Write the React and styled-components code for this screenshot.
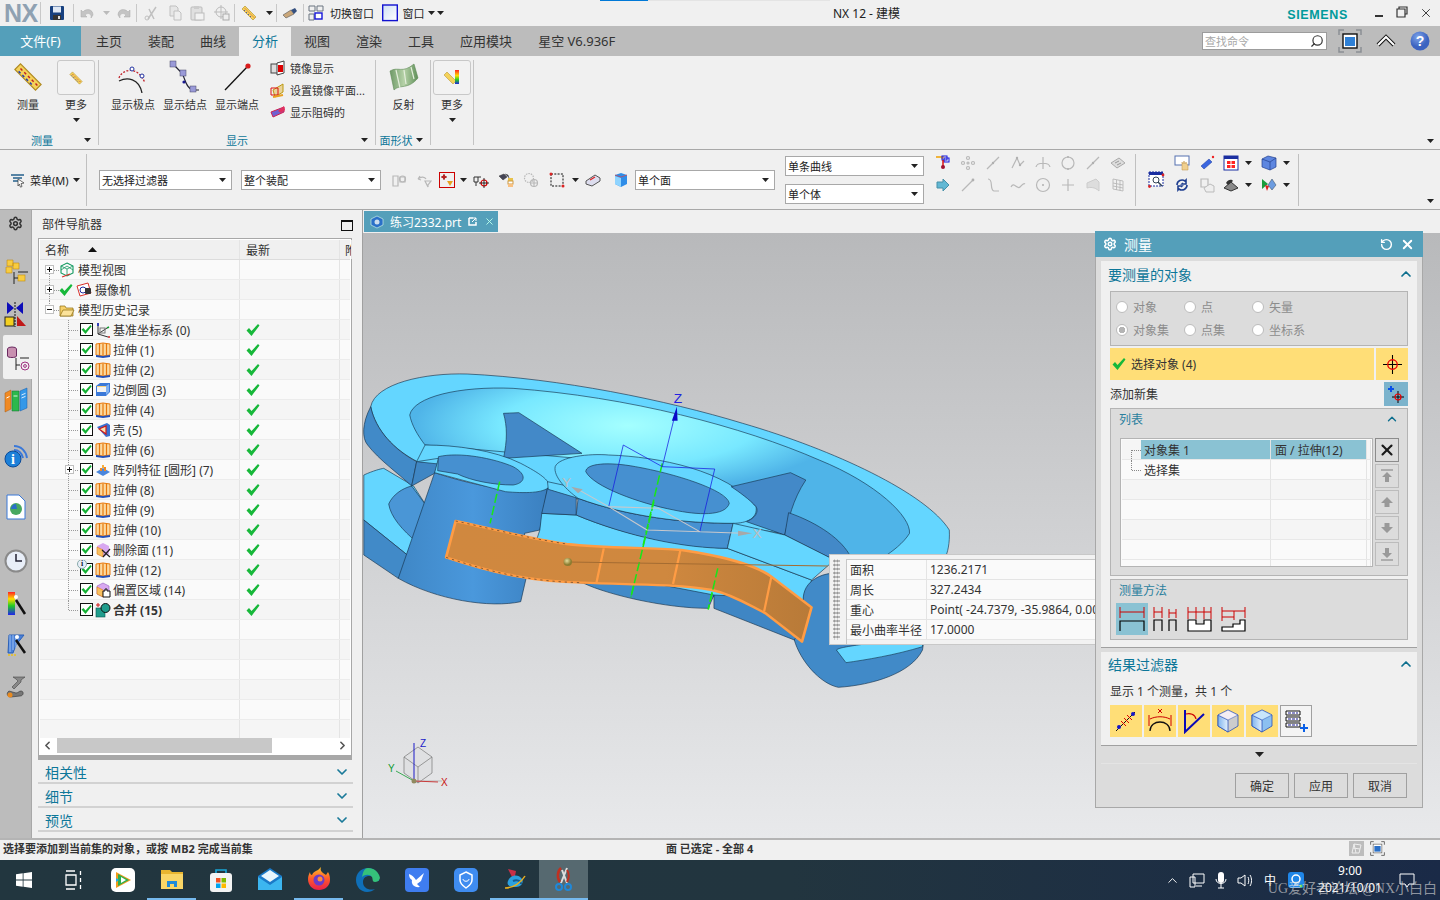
import React from 'react';
import styled, { createGlobalStyle } from 'styled-components';
import { Settings, RotateCw, X, ChevronUp, ChevronDown, ChevronLeft, ChevronRight, Search } from 'lucide-react';

const Global = createGlobalStyle`
  html, body { margin: 0; padding: 0; width: 1440px; height: 900px; overflow: hidden; }
  body { font-family: "Noto Sans", "Noto Sans CJK SC", sans-serif; font-size: 12px; color: #222; }
  svg { display: block; flex: none; }
`;

/* ---------- icons ---------- */
const G = ({ s = 16, vb = '0 0 16 16', children }) => (
  <svg width={s} height={s} viewBox={vb}>{children}</svg>
);
const Arrow = ({ c = '#222' }) => <svg width="7" height="4" viewBox="0 0 7 4"><path d="M0 0h7L3.5 4z" fill={c} /></svg>;

const Save = () => <G><rect x="1" y="1" width="14" height="14" rx="1" fill="#17407f" /><rect x="4" y="1.5" width="8" height="6" fill="#dfe8f4" /><rect x="4" y="10" width="8" height="5" fill="#333" /><rect x="9" y="11" width="2" height="3" fill="#ddd" /></G>;
const Undo = ({ flip }) => <G><g transform={flip ? 'translate(16 0) scale(-1 1)' : undefined}><path d="M3 7C6 3 13 4 13 10l-2 3c1-4-3-6-6-3l2 2H1V5z" fill="#c4c4c4" stroke="#aaa" strokeWidth=".5" /></g></G>;
const Cut = () => <G><path d="M5 14L13 2M11 14L6 4" stroke="#c0c0c0" strokeWidth="1.5" fill="none" /><circle cx="4" cy="13" r="2" fill="none" stroke="#c0c0c0" /></G>;
const Copy = () => <G><path d="M3 1h6l2 2v8H3z" fill="#e6e6e6" stroke="#c0c0c0" /><path d="M7 6h5l2 2v7H7z" fill="#eee" stroke="#c0c0c0" /></G>;
const Paste = () => <G><rect x="2" y="2" width="11" height="13" rx="1" fill="#e0e0e0" stroke="#bbb" /><rect x="5" y="1" width="5" height="3" fill="#ccc" /><rect x="6" y="8" width="9" height="7" fill="#f2f2f2" stroke="#bbb" /></G>;
const Crop = () => <G><circle cx="7" cy="7" r="5" fill="none" stroke="#bbb" /><path d="M7 0v14M0 7h14" stroke="#bbb" /><rect x="9" y="9" width="6" height="6" fill="#eee" stroke="#aaa" /></G>;
const Ruler = ({ s = 16 }) => <G s={s}><path d="M1 4L4 1L15 12L12 15z" fill="#f4d25a" stroke="#b08a20" strokeWidth=".6" /><path d="M4 3.5l1 1M6 5.5l1 1M8 7.5l1 1M10 9.5l1 1M12 11.5l1 1" stroke="#c0241e" strokeWidth=".8" /><path d="M3 5l1 1M5 7l1 1M7 9l1 1M9 11l1 1" stroke="#2a3fb0" strokeWidth=".8" /></G>;
const Brush = () => <G><path d="M1 10L9 5l3 4-8 4z" fill="#caa77a" stroke="#555" strokeWidth=".6" /><path d="M9 5l4-2 2 3-3 3z" fill="#35507f" /></G>;
const SwitchWin = () => <G><path d="M1 1h6v5H1zM9 1h6v5H9zM1 9h5v6H1z" fill="none" stroke="#6a7480" /><rect x="7" y="8" width="7" height="6" fill="#fff" stroke="#1414d8" strokeWidth="1.4" /></G>;
const Win = () => <svg width="16" height="18" viewBox="0 0 16 18"><defs><linearGradient id="winG" x1="0" y1="0" x2="1" y2="1"><stop offset="0" stopColor="#cfe0f4" /><stop offset="1" stopColor="#fff" /></linearGradient></defs><rect x=".7" y="1" width="14.6" height="15.6" fill="url(#winG)" stroke="#1212d0" strokeWidth="1.4" /></svg>;
const FitScreen = () => <svg width="24" height="24" viewBox="0 0 24 24"><path d="M1 6V1h5M18 1h5v5M1 18v5h5M18 23h5v-5" fill="none" stroke="#8a8f94" strokeWidth="1.5" /><rect x="5" y="5" width="14" height="14" fill="#fff" stroke="#111" strokeWidth="1.4" /><rect x="7" y="8" width="10" height="9" fill="#2e80d6" /></svg>;
const Help = () => <svg width="20" height="20" viewBox="0 0 20 20"><defs><radialGradient id="hlp" cx=".4" cy=".3"><stop offset="0" stopColor="#7fa5ea" /><stop offset="1" stopColor="#3c63c0" /></radialGradient></defs><circle cx="10" cy="10" r="9.5" fill="url(#hlp)" /><text x="10" y="15" fontSize="14" fontWeight="700" textAnchor="middle" fill="#fff" fontFamily="Liberation Sans, sans-serif">?</text></svg>;
const Pole = () => <svg width="34" height="32" viewBox="0 0 34 32"><path d="M3 17C6 8 22 4 29 22" fill="none" stroke="#c0242c" strokeWidth="1.3" strokeDasharray="2 1.5" /><path d="M3 20c8-4 20-3 23 12" fill="none" stroke="#222" strokeWidth="1.3" /><circle cx="16" cy="8" r="2" fill="#fff" stroke="#2030a0" /><circle cx="26" cy="15" r="2" fill="#fff" stroke="#2030a0" /></svg>;
const Knot = () => <svg width="34" height="34" viewBox="0 0 34 34"><path d="M5 2c3 8 8 8 10 13s4 14 10 15l6 0" fill="none" stroke="#223" strokeWidth="1.2" /><rect x="2" y="1" width="6" height="6" fill="#9a9ad8" stroke="#446" strokeWidth=".5" /><rect x="12" y="10" width="6" height="6" fill="#9a9ad8" stroke="#446" strokeWidth=".5" /><rect x="22" y="26" width="6" height="6" fill="#9a9ad8" stroke="#446" strokeWidth=".5" /><circle cx="16" cy="22" r="1.6" fill="#1a1a90" /></svg>;
const EndPt = () => <svg width="30" height="32" viewBox="0 0 30 32"><path d="M3 29L26 5" stroke="#111" strokeWidth="1.3" /><circle cx="26" cy="5" r="2.6" fill="#d81c1c" /></svg>;
const Mirror = ({ v }) => <svg width="16" height="16" viewBox="0 0 16 16">{v === 0 && <><rect x="1" y="4" width="7" height="9" fill="#ddd" stroke="#444" /><path d="M7 3l7-2v12l-7 2z" fill="#fff" stroke="#444" /><rect x="8" y="5" width="5" height="7" fill="#d00" /></>}{v === 1 && <><path d="M3 8l10-6v8L5 15z" fill="#e9d39a" stroke="#b91" /><path d="M1 6h7v7H1z" fill="none" stroke="#d11" /><path d="M3 15l10-2" stroke="#e8a020" strokeWidth="2" /></>}{v === 2 && <><path d="M1 8l13-5v5L3 13z" fill="#7060d0" stroke="#d02050" /><path d="M8 7l6-5 1 4-4 3z" fill="#e03060" /></>}</svg>;
const Reflect = () => <svg width="32" height="30" viewBox="0 0 32 30"><defs><linearGradient id="rfl" x1="0" x2="1"><stop offset="0" stopColor="#6f9a68" /><stop offset=".5" stopColor="#b6d2a8" /><stop offset="1" stopColor="#5f8f58" /></linearGradient></defs><path d="M2 9C10 4 14 12 26 2l4 14c-10 12-18 6-24 12z" fill="url(#rfl)" stroke="#5e8a55" strokeWidth=".6" /><path d="M8 8l4 18M16 8l2 14M23 5l3 12" stroke="#e4eedc" strokeWidth="1.2" fill="none" /></svg>;
const RulerRainbow = () => <svg width="18" height="18" viewBox="0 0 18 18"><defs><linearGradient id="rb" x1="0" x2="0" y1="0" y2="1"><stop offset="0" stopColor="#f22" /><stop offset=".4" stopColor="#fd0" /><stop offset=".7" stopColor="#2c2" /><stop offset="1" stopColor="#22d" /></linearGradient></defs><path d="M1 6l3-3 9 9-3 3z" fill="#f4d25a" stroke="#b08a20" strokeWidth=".5" /><rect x="12" y="1" width="4" height="14" fill="url(#rb)" /></svg>;
const MenuIc = () => <G><path d="M1 3h13M3 6h9M3 9h6" stroke="#24608c" strokeWidth="1.4" /><path d="M8 7l6 4-3 .6 1 3-1.6.5-1-3L8 14z" fill="#fff" stroke="#333" strokeWidth=".7" /></G>;
const Filter = () => <svg width="16" height="16" viewBox="0 0 16 16"><rect x=".5" y=".5" width="15" height="15" fill="none" stroke="#c00" /><path d="M5 2v6M2 5h6" stroke="#711" /><circle cx="5" cy="5" r="1.4" fill="none" stroke="#c00" /><path d="M8 9h6l-3 5z" fill="#e8a020" /></svg>;
const Cross = ({ s = 16 }) => <svg width={s} height={s} viewBox="0 0 16 16"><path d="M8 0v16M0 8h16" stroke="#000" strokeWidth=".9" /><circle cx="8" cy="8" r="4" fill="none" stroke="#e00" strokeWidth="1.1" /></svg>;
const Gray = ({ k }) => {
  const p = { fill: 'none', stroke: '#b8b8b8', strokeWidth: 1.2 };
  const shapes = {
    dots: <><circle cx="3" cy="8" r="1.5" {...p} /><circle cx="8" cy="3" r="1.5" {...p} /><circle cx="13" cy="8" r="1.5" {...p} /><circle cx="8" cy="13" r="1.5" {...p} /><circle cx="8" cy="8" r="1" {...p} /></>,
    slash: <><path d="M2 14L14 2" {...p} /><circle cx="8" cy="8" r="1.2" fill="#b0b0b0" /></>,
    poly: <><path d="M2 13L7 3l3 7 4-4" {...p} /><circle cx="7" cy="3" r="1.2" fill="#b0b0b0" /><circle cx="10" cy="10" r="1.2" fill="#b0b0b0" /></>,
    fan: <><path d="M8 2v12M1 12C2 7 14 7 15 12" {...p} /></>,
    ring: <><circle cx="8" cy="8" r="6" {...p} /><circle cx="8" cy="2" r="1" fill="#b0b0b0" /><circle cx="8" cy="14" r="1" fill="#b0b0b0" /></>,
    sheet: <><path d="M1 8l8-5 6 5-8 5z" fill="#ddd" stroke="#aaa" /><path d="M5 8l4-2M7 10l4-2" stroke="#999" /></>,
    end: <><path d="M2 14L13 3" {...p} /><circle cx="13" cy="3" r="1.4" fill="#b0b0b0" /></>,
    s: <><path d="M3 2c6 0 1 11 6 12l5 0" {...p} /></>,
    wave: <><path d="M1 10c3-6 6 3 9 0s4-4 5-3" {...p} /></>,
    center: <><circle cx="8" cy="8" r="6.5" {...p} /><circle cx="8" cy="8" r="1" fill="#b0b0b0" /></>,
    plus: <><path d="M8 2v12M2 8h12" {...p} /></>,
    blob: <><path d="M2 6l9-4 3 3v9c-4-4-9-4-12-3z" fill="#ddd" stroke="#ccc" /></>,
    grid: <><path d="M3 2l10 2v10L3 12zM6.5 3v10M10 3.5v10M3 6l10 2M3 9l10 2" {...p} strokeWidth=".9" /></>,
    gears: <><path d="M2 4h5v10H2zM9 5h5v5H9z" {...p} /><circle cx="11.5" cy="7" r="3" {...p} /></>,
    undoF: <><path d="M2 7c3-3 7-2 8 0M2 7l2-3M2 7l3 1M9 9h6l-3 4v2z" {...p} /></>,
    selGrey: <><circle cx="6" cy="6" r="4.5" {...p} strokeDasharray="1.5 1" /><circle cx="11" cy="11" r="3.5" {...p} /><path d="M11 7v8M7 11h8" {...p} /></>,
    doc: <><path d="M2 2h7v8H2z" {...p} /><path d="M5 11l6-4 4 2v6H7z" fill="#eee" stroke="#bbb" /></>,
  };
  return <G>{shapes[k]}</G>;
};
const Sel = ({ k }) => {
  if (k === 'redX') return <G><path d="M1 5h4v5H1z" fill="none" stroke="#333" /><path d="M5 5h3M3 10v4" stroke="#333" /><circle cx="11" cy="11" r="3" fill="none" stroke="#d00" strokeWidth="1.2" /><path d="M11 6v10M6 11h10" stroke="#000" strokeWidth=".8" /></G>;
  if (k === 'bino') return <G><path d="M1 4l5-2 3 3-4 3zM7 2l3 1 1 3" fill="#445" stroke="#333" strokeWidth=".5" /><rect x="10" y="6" width="5" height="3" fill="#e8c24a" /><rect x="10" y="9" width="5" height="3" fill="#fff" stroke="#c94" /><rect x="10" y="12" width="5" height="3" fill="#f8c080" /></G>;
  if (k === 'box') return <G><rect x="2" y="2" width="12" height="12" fill="none" stroke="#111" strokeDasharray="2 1.3" /><circle cx="2" cy="2" r="1.5" fill="#d22" /><circle cx="14" cy="14" r="1.5" fill="#d22" /></G>;
  if (k === 'tilt') return <G><path d="M1 9l9-6 5 3v3l-8 5-6-2z" fill="#dde" stroke="#555" /><path d="M5 8l5-3" stroke="#d22" strokeWidth="1.4" /></G>;
  if (k === 'cube') return <G><path d="M2 3l6-2 6 2v9l-6 3-6-3z" fill="#2f8de8" /><path d="M2 3l6 2 6-2" stroke="#d44" fill="none" strokeWidth=".7" /><path d="M2 4l6 2v9l-6-3z" fill="#8fd4ff" /></G>;
  if (k === 'wcs') return <G><path d="M1 2h7l-1 2" fill="none" stroke="#f0a000" strokeWidth="1.5" /><rect x="7" y="1" width="5" height="4" fill="none" stroke="#1212e0" /><rect x="9" y="3" width="5" height="4" fill="none" stroke="#1212e0" /><path d="M8 5v8" stroke="#d00" strokeWidth="1.4" /><circle cx="8" cy="12" r="2" fill="#a01030" /></G>;
  if (k === 'next') return <G><path d="M2 5h6V2l6 6-6 6v-3H2z" fill="#62b8d4" stroke="#4790a8" /></G>;
  if (k === 'hand') return <G><rect x="1" y="1" width="14" height="9" fill="#fff" stroke="#5570b0" /><path d="M8 15V7l1 2 1-3 1 3 1-2 2 4v4z" fill="#f0d090" stroke="#c09040" strokeWidth=".5" /></G>;
  if (k === 'bar') return <G><path d="M2 11l8-7 3 3-8 7z" fill="#3a66e0" stroke="#1d3a9a" strokeWidth=".5" /><circle cx="14" cy="2" r="1.2" fill="#e22" /></G>;
  if (k === 'redgrid') return <G><rect x="1" y="1" width="14" height="14" fill="#fff" stroke="#1a2ea0" /><rect x="1" y="1" width="14" height="3" fill="#1a2ea0" /><rect x="4" y="6" width="8" height="7" fill="#f22" /><path d="M8 6v7M4 9.500h8" stroke="#fff" /></G>;
  if (k === 'blueCube') return <G><path d="M1 4l6-3 8 2v9l-6 3-8-3z" fill="#5d86e0" stroke="#23408e" strokeWidth=".7" /><path d="M1 4l8 3 6-4M9 7v8" fill="none" stroke="#23408e" strokeWidth=".7" /></G>;
  if (k === 'zoomFit') return <svg width="17" height="18" viewBox="0 0 17 18"><rect x="1" y="1" width="14" height="14" fill="#fff" stroke="#1a2ea0" strokeDasharray="2 1" /><rect x="1" y="1" width="14" height="3" fill="#1a2ea0" /><circle cx="8" cy="9" r="3" fill="none" stroke="#345" /><path d="M10 11l4 4" stroke="#345" strokeWidth="1.4" /><circle cx="15" cy="4" r="1.4" fill="#d22" /><circle cx="1.500" cy="15.500" r="1.4" fill="#d22" /></svg>;
  if (k === 'spin') return <G><path d="M3 8a5 5 0 018-4l1-1v4H8l1-1M13 8a5 5 0 01-8 4l-1 1V9h4l-1 1" fill="none" stroke="#1f3f90" strokeWidth="1.6" /></G>;
  if (k === 'dish') return <G><path d="M1 11l7-6 7 6-7 3z" fill="#888" stroke="#333" /><path d="M3 6c2-4 6-4 7-2L5 8z" fill="#333" /></G>;
  if (k === 'mix') return <G><path d="M1 2l6 5-6 5z" fill="#1c9c3c" /><path d="M4 8l2 6 2-5z" fill="#d22" /><path d="M7 8l4-6 4 6-4 5z" fill="#6c9ce0" stroke="#345" strokeWidth=".5" /></G>;
  return null;
};

/* navigator feature icons */
const Check = ({ s = 14 }) => <svg width={s} height={s} viewBox="0 0 14 14"><path d="M.5 7.500L3 5l2.500 3L12 1l1.500 1.500L5.500 13z" fill="#17b83a" /></svg>;
const BoxCheck = () => <svg width="13" height="13" viewBox="0 0 13 13"><rect x=".5" y=".5" width="12" height="12" fill="#fff" stroke="#111" /><path d="M1.500 6.500L3.500 5l2 2.500L10.500 2l1.200 1.200L5.500 11z" fill="#14b134" /></svg>;
const Extrude = () => <svg width="16" height="16" viewBox="0 0 16 16"><path d="M1 2l7-1 7 1v11l-7 1-7-1z" fill="#fbd9a0" stroke="#e8780c" /><path d="M4.500 2v11M8 1.500v12M11.500 2v11" stroke="#e8780c" strokeWidth="1.2" /><path d="M1 13l7 1 7-1v2l-7 1-7-1z" fill="#2450b8" /></svg>;
const FeatIcon = ({ k }) => {
  if (k === 'extrude') return <Extrude />;
  if (k === 'model') return <G><path d="M8 1l6 3v7l-6 3-6-3V4z" fill="none" stroke="#129a60" strokeWidth="1.1" /><path d="M2 4l6 3 6-3M8 7v7M2 8l6-4 6 4" fill="none" stroke="#129a60" strokeWidth=".8" /><path d="M3 15l8-3" stroke="#d8302a" strokeWidth="1.2" /></G>;
  if (k === 'camera') return <G><path d="M1 4l11-3 3 10-11 3z" fill="#fff" stroke="#d8302a" /><circle cx="7" cy="8" r="3" fill="none" stroke="#2030a0" /><rect x="9" y="6" width="6" height="6" fill="#333" rx="1" /></G>;
  if (k === 'folder') return <G><path d="M1 4h5l1 2h7v8H1z" fill="#f7d16a" stroke="#8a6a10" strokeWidth=".7" /><path d="M1 14l3-6h11l-3 6z" fill="#fbe29a" stroke="#8a6a10" strokeWidth=".7" /></G>;
  if (k === 'datum') return <G><path d="M3 1v11l10 3M3 12l9-6" fill="none" stroke="#333" /><path d="M3 1v3" stroke="#1224c0" strokeWidth="1.5" /><path d="M12 6l2-1" stroke="#119a30" strokeWidth="1.5" /><path d="M13 15l2 0" stroke="#d02020" strokeWidth="1.5" /><rect x="5" y="6" width="5" height="5" fill="none" stroke="#777" /></G>;
  if (k === 'blend') return <G><path d="M1 4l4-3h10v9l-4 4H1z" fill="#3a78d8" /><path d="M2 4h9v3H2z" fill="#f8d07a" /><rect x="2" y="5" width="9" height="5" fill="#f2f2f2" /><path d="M11 4l3-2v8l-3 3z" fill="#7fb0f0" /></G>;
  if (k === 'shell') return <G><path d="M2 5l10-4 3 2v11l-4 1z" fill="#3a70d0" /><path d="M4 7l7-3v8z" fill="#f9e0b0" stroke="#d01818" strokeWidth="1.2" /></G>;
  if (k === 'pattern') return <G><path d="M1 10l7-4 7 4-7 4z" fill="#4a86dc" /><path d="M5 9V6h2v3zM9 9V5h2v4z" fill="#f08a24" /><path d="M7 6V3h2v3" fill="#f8b040" /></G>;
  if (k === 'delete') return <G><path d="M2 4l6-3 6 3v8l-6 3-6-3z" fill="#d8a8f0" /><path d="M2 5l6 3v7l-6-3z" fill="#f8c060" stroke="#e07a10" strokeWidth=".6" /><path d="M7 8l8 7M15 7l-7 8" stroke="#222" strokeWidth="1.2" /></G>;
  if (k === 'offset') return <G><path d="M2 4l6-3 6 3v8l-6 3-6-3z" fill="#d8a8f0" stroke="#9060c0" strokeWidth=".6" /><path d="M2 5l6 3v7l-6-3z" fill="#f8c060" stroke="#e07a10" strokeWidth=".6" /><path d="M8 15V9h2V7h2v2h3v6z" fill="#fff" stroke="#111" /></G>;
  if (k === 'unite') return <G><rect x="1" y="6" width="9" height="9" fill="#1f9c8c" stroke="#0a5a50" strokeWidth=".6" /><circle cx="10.500" cy="6" r="4.500" fill="#1f9c8c" stroke="#111" /><path d="M1 3h4M3 1v4" stroke="#d01818" /></G>;
  return null;
};
const RailIc = ({ k }) => {
  const s = { width: 26, height: 28, viewBox: '0 0 26 28' };
  if (k === 'asm') return <svg {...s}><path d="M4 2h6v6H4zM10 5h6v6h-6zM3 9h6v6H3z" fill="#f8cc40" stroke="#c08c10" strokeWidth=".6" /><rect x="15" y="17" width="7" height="6" fill="#f8cc40" stroke="#c08c10" strokeWidth=".6" /><path d="M11 14v12M11 20h4M15 14h10" stroke="#222" fill="none" /></svg>;
  if (k === 'constr') return <svg {...s}><path d="M4 1l7 6-7 6zM20 1l-7 6 7 6z" fill="#0c0cb8" /><rect x="2" y="16" width="9" height="9" fill="#f4d020" stroke="#222" /><path d="M14 15l9 10h-9z" fill="#c01818" /><path d="M12 1v25" stroke="#111" strokeDasharray="2 1" /></svg>;
  if (k === 'part') return <svg {...s}><ellipse cx="7" cy="6" rx="4.500" ry="2" fill="#c890b0" stroke="#6a2a60" /><path d="M2.500 6v7c0 2 9 2 9 0V6" fill="#c890b0" stroke="#6a2a60" /><path d="M11 15v12M11 22h4M15 15h9" stroke="#222" fill="none" /><circle cx="20" cy="23" r="4" fill="none" stroke="#a03080" /><circle cx="20" cy="23" r="1.4" fill="none" stroke="#a03080" /></svg>;
  if (k === 'books') return <svg {...s}><path d="M2 7l6-3v19l-6 3z" fill="#f08a24" stroke="#a85a10" strokeWidth=".5" /><path d="M3.500 12l3-1.500" stroke="#fff" /><path d="M9 5h7v20H9z" fill="#2cb84c" stroke="#14702c" strokeWidth=".5" /><path d="M10.500 10h4" stroke="#d8f8d8" /><path d="M17 5l7-3v20l-7 3z" fill="#3498e8" stroke="#1a5ca8" strokeWidth=".5" /><path d="M18.500 9l4-1.700M18.500 12l4-1.700" stroke="#d8ecff" /></svg>;
  if (k === 'info') return <svg {...s}><path d="M11 5c7 0 12 5 13 12M11 9c5 0 8 4 9 8" fill="none" stroke="#3a78d8" strokeWidth="2" /><circle cx="10" cy="18" r="8" fill="#1c80d8" stroke="#0c4a98" /><text x="10" y="23" textAnchor="middle" fontSize="14" fontWeight="700" fill="#fff" fontFamily="Liberation Serif, serif">i</text></svg>;
  if (k === 'doc') return <svg {...s}><path d="M4 2h12l6 6v18H4z" fill="#fff" stroke="#3a78d8" /><circle cx="13" cy="16" r="6" fill="#48a860" /><path d="M8 16a5 5 0 015-5l1 5z" fill="#2a70c8" /></svg>;
  if (k === 'clock') return <svg {...s}><circle cx="13" cy="14" r="10.500" fill="#e8eef8" stroke="#8a8a8a" strokeWidth="2" /><path d="M13 7v7h6" stroke="#223" strokeWidth="1.5" fill="none" /></svg>;
  if (k === 'rainbow') return <svg {...s}><defs><linearGradient id="rn" x1="0" x2="0" y1="0" y2="1"><stop offset="0" stopColor="#f22" /><stop offset=".3" stopColor="#fd0" /><stop offset=".6" stopColor="#2c2" /><stop offset="1" stopColor="#22e" /></linearGradient></defs><rect x="5" y="2" width="7" height="23" fill="url(#rn)" /><path d="M13 10l9 14" stroke="#111" strokeWidth="2.5" /><circle cx="13" cy="7" r="2" fill="#fff" /></svg>;
  if (k === 'wand') return <svg {...s}><path d="M6 4l15 0-8 10-3 8-5 0z" fill="#4a80d8" stroke="#2a60b8" /><path d="M7 4v17M10 4v15M13 5v12" stroke="#9cc0f0" /><path d="M13 9l9 13" stroke="#111" strokeWidth="2.5" /><circle cx="14" cy="6" r="2" fill="#fff" /><path d="M5 24h9" stroke="#e8c020" strokeWidth="1.5" strokeDasharray="2 1" /></svg>;
  if (k === 'tools') return <svg {...s}><path d="M10 4h12l-4 3v2l-7 7-2-2 6-6-2-2z" fill="#888" stroke="#444" strokeWidth=".6" /><path d="M6 18c-3 2-2 6 2 6l9-1c4 0 4-5 1-5-2 0-3 2-5 2z" fill="#777" stroke="#333" strokeWidth=".6" /><circle cx="7" cy="22" r="2.500" fill="#e88a20" /></svg>;
  if (k === 'gear') return <Settings size={15} color="#333" strokeWidth={2.4} />;
  return null;
};
const Method = ({ k }) => {
  const r = { stroke: '#c00', strokeWidth: 1, fill: 'none' };
  const b = { stroke: '#000', strokeWidth: 1.2, fill: 'none' };
  return <G s={26} vb="0 0 26 26">{k === 0 && <><path d="M1 1v11M25 1v11M1 6h24" {...r} /><path d="M1 25V15h24v10" {...b} /></>}
    {k === 1 && <><path d="M1 1v11M9 1v11M1 6h8M16 3v9M23 3v9M16 7h7" {...r} /><path d="M1 25V14h8v11M16 25V14h7v11" {...b} /></>}
    {k === 2 && <><path d="M1 1v12M9 1v12M17 1v12M24 1v12M1 6h23" {...r} /><path d="M1 25V14h8v4h8v-4h7v11z" {...b} fill="#fff" /></>}
    {k === 3 && <><path d="M1 1v14M13 5v9M24 1v11M1 5h23M1 11h12" {...r} /><path d="M1 25v-4h11v-3h7v-4h5v11z" {...b} fill="#fff" /></>}</G>;
};
const Res = ({ k }) => {
  if (k === 0) return <G s={26} vb="0 0 26 26"><path d="M3 23L22 4" stroke="#111" /><circle cx="6" cy="19" r="2" fill="#1515c8" /><circle cx="20" cy="6" r="2" fill="#1515c8" /><path d="M8 13l5 5M11 10l5 5M14 7l5 5" stroke="#d00" /></G>;
  if (k === 1) return <G s={26} vb="0 0 26 26"><path d="M3 23c0-12 20-12 20 0" fill="none" stroke="#111" strokeWidth="1.3" /><path d="M2 7v11M24 7v11M3 11c6-3 14-3 20 0" fill="none" stroke="#c00" /><path d="M11 1l4 4M15 1l-4 4" stroke="#c00" /></G>;
  if (k === 2) return <G s={26} vb="0 0 26 26"><path d="M4 2v22L23 6" fill="none" stroke="#0a0ab8" strokeWidth="2" /><path d="M5 6c4-1 9 0 10 5" fill="none" stroke="#c00" strokeWidth="1.2" /></G>;
  return <G s={26} vb="0 0 26 26"><defs><linearGradient id={`cb${k}`} x1="0" x2="1"><stop offset="0" stopColor="#7fb4ee" /><stop offset="1" stopColor="#e4f1fd" /></linearGradient></defs><path d="M3 7l10-5 10 5v11l-10 6-10-6z" fill={k === 3 ? '#ccc' : '#8cc0f0'} stroke="#2a50b8" strokeWidth=".8" /><path d="M3 7l10 5v12L3 18z" fill={`url(#cb${k})`} stroke="#2a50b8" strokeWidth=".8" /><path d="M3 7l10-5 10 5-10 5z" fill={k === 3 ? '#f4eef4' : '#c8e6fc'} stroke="#2a50b8" strokeWidth=".5" /></G>;
};

/* taskbar */
const Tk = ({ k }) => {
  if (k === 'start') return <G s={16}><path d="M0 2.200L6.700 1.300v6.300H0zM7.500 1.200L16 0v7.600H7.500zM0 8.400h6.700v6.300L0 13.800zM7.500 8.400H16V16l-8.500-1.200z" fill="#fff" /></G>;
  if (k === 'view') return <svg width="17" height="20" viewBox="0 0 17 20"><path d="M1 1h9M1 19h9M1 5h10v10H1z" fill="none" stroke="#fff" strokeWidth="1.3" /><path d="M15.500 1v4M15.500 8v4M15.500 15v4" stroke="#fff" strokeWidth="1.3" /></svg>;
  const s = { width: 24, height: 24, viewBox: '0 0 24 24' };
  if (k === 'video') return <svg {...s}><rect width="24" height="24" rx="5" fill="#fff" /><path d="M5 4l15 8-15 8z" fill="#f29b1c" /><path d="M7 6l11 6-11 6z" fill="#2caf4c" /><path d="M10 9l5 3-5 3z" fill="#fff" /><path d="M5 4v6l3 2-3 2v6z" fill="#1caee8" /></svg>;
  if (k === 'folder') return <svg {...s}><path d="M1 3h9l2 2h11v17H1z" fill="#e8b530" /><path d="M1 7h22v15H1z" fill="#f9d566" /><path d="M7 14h10v6h-3v-3h-4v3H7z" fill="#1f8ad8" /></svg>;
  if (k === 'store') return <svg {...s}><rect x="1" y="5" width="22" height="19" rx="3" fill="#f3f3f3" /><path d="M7 5V2h10v3" fill="none" stroke="#19a7d8" strokeWidth="1.6" /><rect x="7" y="10" width="4.500" height="4.500" fill="#f25022" /><rect x="12.500" y="10" width="4.500" height="4.500" fill="#7fba00" /><rect x="7" y="15.500" width="4.500" height="4.500" fill="#00a4ef" /><rect x="12.500" y="15.500" width="4.500" height="4.500" fill="#ffb900" /></svg>;
  if (k === 'mail') return <svg {...s}><path d="M12 0l12 8v14H0V8z" fill="#1a7ac8" /><path d="M0 9l12 8 12-8v13H0z" fill="#3cb6f0" /><path d="M3 8l9-6 9 6-9 6z" fill="#e8f6fd" /></svg>;
  if (k === 'firefox') return <svg {...s}><defs><linearGradient id="ff" x1="0" y1="0" x2="0" y2="1"><stop offset="0" stopColor="#ffc32a" /><stop offset=".5" stopColor="#ff5a2a" /><stop offset="1" stopColor="#e8204c" /></linearGradient></defs><path d="M12 23C5 23 1 18 1 12c0-3 1-5 2-7 0 2 1 3 2 3 1-3 4-4 6-5l3-3c-1 3 0 4 2 6l3 2 2-3c2 3 2 6 2 8 0 6-5 10-11 10z" fill="url(#ff)" /><circle cx="12" cy="13" r="5.500" fill="#6b3bc8" /><circle cx="13" cy="12" r="2.500" fill="#ff8a3c" /></svg>;
  if (k === 'edge') return <svg {...s}><path d="M12 0C5 0 0 5 0 12c0 7 5 12 11 12 3 0 6-1 8-3-6 2-12-1-12-7 0-4 3-6 6-6s6 2 5 5h5c1-7-4-13-11-13z" fill="#0f6fb8" /><path d="M12 0c6 0 11 4 12 10-1 3-3 4-5 4-3 0-2-3-3-5-2-3-7-3-10 0C7 3 9 0 12 0z" fill="#35c17a" /></svg>;
  if (k === 'bird') return <svg {...s}><rect width="24" height="24" rx="4" fill="#3f7df0" /><path d="M4 6c3 1 5 3 7 6l8-7-3 8-4 3 3 3c-6 1-9-3-8-7-2-1-3-3-3-6z" fill="#fff" /></svg>;
  if (k === 'shield') return <svg {...s}><rect width="24" height="24" rx="5" fill="#3f8cf0" /><path d="M12 4l6 3v5c0 4-3 6-6 8-3-2-6-4-6-8V7z" fill="none" stroke="#fff" strokeWidth="1.5" /><path d="M9 11c0 3 6 3 6 0" fill="none" stroke="#fff" /></svg>;
  if (k === 'nx') return <svg {...s}><path d="M5 2l8 2-2 10z" fill="#c83048" /><path d="M5 14c2-6 10-8 14-2 2 4-1 8-6 8s-10-1-8-6z" fill="#2aa0e0" /><path d="M10 14c4-2 8 0 8 3" fill="none" stroke="#145a90" strokeWidth="2" /><path d="M2 21c8 0 16-5 20-12" fill="none" stroke="#e8b020" strokeWidth="1.5" /></svg>;
  if (k === 'cut') return <svg {...s}><path d="M9 16L15 1M15 16L10 3" stroke="#ddd" strokeWidth="2" /><path d="M9 1a7 9 0 00-1 14" fill="none" stroke="#c03020" strokeWidth="2.500" /><path d="M15 3c2 3 2 8 0 12" fill="none" stroke="#c03020" strokeWidth="2" /><circle cx="7" cy="20" r="3" fill="none" stroke="#2088d8" strokeWidth="2" /><circle cx="16" cy="20" r="3" fill="none" stroke="#2088d8" strokeWidth="2" /></svg>;
  return null;
};

/* ---------- app chrome ---------- */
const Page = styled.div`
  width: 1440px; height: 900px; display: flex; flex-direction: column; background: #f0f0f0; overflow: hidden;
`;
const TitleBar = styled.div`
  height: 26px; flex: none; display: flex; align-items: center; position: relative; background: #f0f0f0;
`;
const Progress = styled.div`
  position: absolute; left: 600px; top: 0; width: 230px; height: 1px;
  background: linear-gradient(90deg, #0078d7 48px, #e4e4e4 48px);
`;
const NxLogo = styled.div`
  width: 41px; padding-left: 4px; font: 700 25px/26px "Liberation Sans", sans-serif; letter-spacing: -.5px;
  color: #8fa1b2; box-sizing: border-box; border-right: 1px solid #c8c8c8; height: 22px; line-height: 22px; flex: none;
`;
const QuickBar = styled.div`
  width: 833px; display: flex; align-items: center; flex: none; height: 100%;
`;
const QuickBtn = styled.div`
  width: ${p => p.$w || 24}px; flex: none; display: flex; justify-content: center; align-items: center; gap: ${p => p.$gap || 4}px; color: #222; font-size: 11px;
`;
const VSep = styled.div`
  width: 1px; height: 18px; background: #c8c8c8; flex: none;
`;
const AppTitle = styled.div`
  font-size: 12px; color: #222; white-space: nowrap;
`;
const Siemens = styled.div`
  margin-left: auto; font: 700 12.500px "Liberation Sans", sans-serif; letter-spacing: .65px; color: #009a9b; padding-top: 3px;
`;
const WinBtns = styled.div`
  width: 92px; display: flex; flex: none; justify-content: space-around; padding: 0 2px 0 20px; box-sizing: border-box;
`;
const TabBar = styled.div`
  height: 30px; flex: none; background: #bcbcbc; display: flex; align-items: stretch; padding-right: 10px;
`;
const FileTab = styled.div`
  width: 81px; background: #549fba; color: #fff; font-size: 13px; display: flex; align-items: center; justify-content: center; margin-right: 2px; padding-bottom: 2px; box-sizing: border-box;
`;
const Tab = styled.div`
  padding: 0 13px 2px; font-size: 13px; display: flex; align-items: center; color: ${p => p.$active ? '#0d7799' : '#333'};
  background: ${p => p.$active ? '#f0f0f0' : 'transparent'}; margin-top: ${p => p.$active ? '1px' : 0}; white-space: nowrap;
`;
const TabRight = styled.div`
  margin-left: auto; display: flex; align-items: center; gap: 14px;
`;
const SearchBox = styled.div`
  width: 125px; height: 18px; background: #fff; border: 1px solid #9c9c9c; box-sizing: border-box; display: flex; align-items: center; justify-content: space-between;
  padding: 0 2px; color: #a8a8a8; font-size: 11px; margin-right: -3px;
`;

const Ribbon = styled.div`
  height: 94px; flex: none; display: flex; padding-top: 4px; box-sizing: border-box; border-bottom: 1px solid #a8a8a8; position: relative;
`;
const RGroup = styled.div`
  width: ${p => p.$w}px; flex: none; border-right: 1px solid #c4c4c4; display: flex; flex-direction: column; margin-bottom: 4px; box-sizing: border-box;
`;
const RBody = styled.div`
  height: 68px; display: flex; padding-left: ${p => p.$pad || 0}px;
`;
const RLabel = styled.div`
  flex: 1; display: flex; align-items: flex-end; color: #0d7799; font-size: 11px; position: relative; justify-content: center; padding-right: ${p => p.$pr || 0}px; margin-bottom: -3px;
`;
const RArrow = styled.span`
  position: absolute; right: ${p => p.$r || 7}px; bottom: 6px;
`;
const BigTool = styled.div`
  width: ${p => p.$w || 52}px; display: flex; flex-direction: column; align-items: center; font-size: 11px; color: #333; flex: none; white-space: nowrap;
`;
const BigIcon = styled.div`
  height: 32px; margin: 1px 0 3px; display: flex; align-items: center; justify-content: center;
`;
const ToolArrow = styled.span`
  display: block; margin-top: 6px;
`;
const MoreBtn = styled.div`
  width: 38px; height: 35px; border: 1px solid #c8c8c8; border-radius: 3px; background: #f2f2f2; display: flex; align-items: center; justify-content: center; box-sizing: border-box; margin: 0 0 1px;
`;
const SmallTools = styled.div`
  display: flex; flex-direction: column; gap: 6px; padding: 0 0 0 7px; width: 108px; box-sizing: border-box;
`;
const SmallTool = styled.div`
  display: flex; align-items: center; gap: 4px; height: 16px; font-size: 11px; color: #333; white-space: nowrap;
`;
const CornerArrow = styled.span`
  position: absolute; right: 6px; bottom: ${p => p.$b || 5}px;
`;
const SelBar = styled.div`
  height: 60px; flex: none; display: flex; align-items: center; border-bottom: 1px solid #a8a8a8; box-sizing: border-box; position: relative;
`;
const MenuBtn = styled.div`
  width: 86px; display: flex; align-items: center; gap: 4px; padding-left: 10px; box-sizing: border-box; font-size: 11px; color: #222; flex: none;
`;
const BarSep = styled.div`
  width: 1px; height: 52px; background: #c0c0c0; flex: none; margin: 0 ${p => p.$r || 0}px 0 ${p => p.$l || 0}px;
`;
const Select = styled.div`
  width: ${p => p.$w}px; height: 20px; background: #fff; border: 1px solid #a8a8a8; box-sizing: border-box; display: flex; align-items: center; justify-content: space-between;
  padding: 0 5px 0 2px; font-size: 11px; color: #222; flex: none; margin-right: ${p => p.$mr || 0}px;
`;
const TwoSel = styled.div`
  display: flex; flex-direction: column; gap: 8px; margin: 0 6px 0 10px; flex: none;
`;
const IconCell = styled.div`
  width: ${p => p.$w || 25}px; height: 22px; display: flex; align-items: center; justify-content: center; flex: none;
`;
const SplitCell = styled.div`
  width: ${p => p.$w}px; height: 22px; display: flex; align-items: center; gap: 6px; padding-left: ${p => p.$pl}px; box-sizing: border-box; flex: none;
`;
const IconRows = styled.div`
  display: grid; grid-template-columns: repeat(8, 25px); flex: none; margin-bottom: 12px;
`;
const ViewRows = styled.div`
  display: grid; grid-template-columns: 25px 25px 42px 37px; flex: none; margin-bottom: 12px;
`;

/* ---------- main ---------- */
const Main = styled.div`
  flex: 1; min-height: 0; display: flex;
`;
const Rail = styled.div`
  width: 32px; flex: none; background: #bcbcbc; border-right: 1px solid #a8a8a8; box-sizing: border-box; display: flex; flex-direction: column; align-items: center;
`;
const RailItem = styled.div`
  width: 100%; height: ${p => p.$h}px; margin-top: ${p => p.$mt}px; display: flex; align-items: center; justify-content: center; flex: none;
  ${p => p.$active && 'background: #f0f0f0; margin-left: 3px; width: 29px; border-radius: 2px 0 0 2px; padding-left: 1px; box-sizing: border-box;'}
`;
const NavPanel = styled.div`
  width: 331px; flex: none; border-right: 1px solid #a0a0a0; box-sizing: border-box; display: flex; flex-direction: column; padding: 0 0 6px 6px; background: #f0f0f0;
`;
const NavHead = styled.div`
  height: 28px; display: flex; align-items: center; justify-content: space-between; font-size: 12px; padding: 0 9px 0 4px; flex: none; color: #333;
`;
const MaxIcon = styled.div`
  width: 12px; height: 11px; border: 1px solid #111; border-top-width: 2px; box-sizing: border-box; margin-top: 3px;
`;
const TreeBox = styled.div`
  width: 314px; height: 517px; flex: none; border: 1px solid #a8a8a8; border-bottom: 0; background: #fff; box-sizing: border-box; padding: 1px 1px 2px; display: flex; flex-direction: column;
`;
const TreeList = styled.div`
  flex: 1; min-height: 0; overflow: hidden;
`;
const TreeRow = styled.div`
  display: grid; grid-template-columns: 200px 100px 12px; height: 20px; border-bottom: 1px solid #ececec; box-sizing: border-box;
  background: ${p => p.$head ? '#f0f0f0' : p.$odd ? '#f5f5f5' : '#fafafa'};
  ${p => p.$head && 'border-bottom: 1px solid #dcdcdc;'}
`;
const Cell = styled.div`
  display: flex; align-items: center; gap: ${p => p.$gap ?? 3}px; border-right: 1px solid #e4e4e4; box-sizing: border-box; font-size: 12px; color: #333; white-space: nowrap; overflow: hidden; min-width: 0;
  padding-left: ${p => p.$pl || 0}px; font-weight: ${p => p.$bold ? 700 : 400};
`;
const Expander = styled.span`
  width: 9px; height: 9px; border: 1px solid #c0c0c0; box-sizing: border-box; background: #fff; position: relative; flex: none;
  &::before { content: ''; position: absolute; left: 1px; right: 1px; top: 3px; height: 1px; background: #111; }
  ${p => p.$plus && `&::after { content: ''; position: absolute; top: 1px; bottom: 1px; left: 3px; width: 1px; background: #111; }`}
`;
const ExpSlot = styled.span`
  width: 11px; height: 100%; display: flex; align-items: center; flex: none; position: relative;
  &::before { content: ''; position: absolute; left: 4px; top: ${p => p.$first ? '50%' : 0}; bottom: ${p => p.$end ? '50%' : 0}; border-left: 1px dotted #999; }
  &::after { content: ''; position: absolute; left: 9px; right: -3px; top: 50%; border-top: 1px dotted #999; }
  & > span { z-index: 1; }
`;
const Gutter = styled.span`
  width: 38px; height: 100%; flex: none; position: relative;
  &::before { content: ''; position: absolute; left: 28px; top: 0; bottom: ${p => p.$last ? '50%' : 0}; border-left: 1px dotted #999; }
  &::after { content: ''; position: absolute; left: 29px; right: 0; top: 50%; border-top: 1px dotted #999; }
`;
const GutterExp = styled(Expander)`
  position: absolute; left: 25px; top: 5px; z-index: 1;
`;
const InfoBadge = styled.span`
  position: relative; width: 13px; height: 13px; flex: none; display: block;
`;
const BadgeDot = styled.span`
  position: absolute; left: -3px; top: -4px; width: 10px; height: 10px; border-radius: 50%; background: #e8eef8; border: 1px solid #8aa; box-sizing: border-box;
  font: 700 8px/8px "Liberation Serif", serif; text-align: center; color: #123;
`;
const ScrollBar = styled.div`
  height: 15px; flex: none; display: flex; align-items: center; justify-content: space-between; background: #fff; position: relative; padding: 0 1px;
`;
const Thumb = styled.div`
  position: absolute; left: 17px; width: 215px; top: 0; height: 15px; background: #c8c8c8;
`;
const PanelGrip = styled.div`
  width: 314px; height: 5px; flex: none; background: #a8a8a8;
`;
const Fold = styled.div`
  width: 315px; height: 24px; flex: none; border-bottom: 2px solid #d2d2d2; box-sizing: border-box; display: flex; align-items: center; justify-content: space-between; color: #0d7799; font-size: 14px; padding: 2px 3px 0 7px;
`;

const Workspace = styled.div`
  flex: 1; min-width: 0; display: flex; flex-direction: column; position: relative;
`;
const DocBar = styled.div`
  height: 23px; flex: none; background: #f0f0f0; display: flex; align-items: flex-start; padding: 1px 0 0 1px; box-sizing: border-box;
`;
const DocTab = styled.div`
  width: 134px; height: 21px; background: #549fba; color: #fff; font-size: 12px; display: flex; align-items: center; gap: 6px; padding-left: 6px; box-sizing: border-box;
`;
const Viewport = styled.div`
  flex: 1; min-height: 0; position: relative; background: linear-gradient(180deg, #b8b9bb 0%, #e8e9eb 100%);
`;
const Tip = styled.div`
  position: absolute; left: 466px; top: 321px; width: 266px; height: 91px; background: #f2f2f2; border: 1px solid #c8c8c8; border-right: 0; box-sizing: border-box; display: flex; padding: 4px 0 0 16px; overflow: hidden;
  &::before { content: ''; position: absolute; left: 3px; top: 4px; bottom: 4px; width: 7px; background-image: radial-gradient(#9a9a9a 1px, transparent 1.2px); background-size: 3px 4px; }
`;
const TipGrid = styled.div`
  display: grid; grid-template-columns: 80px 200px; grid-auto-rows: 20px; border-left: 1px solid #c8c8c8; border-top: 1px solid #c8c8c8;
`;
const TipCell = styled.div`
  display: flex; align-items: center; padding-left: 3px; font-size: 12px; color: #333; background: #fafafa; border-bottom: 1px solid #e4e4e4; border-right: 1px solid #e4e4e4; white-space: nowrap; overflow: hidden;
`;

/* ---------- measure dialog ---------- */
const Dialog = styled.div`
  position: absolute; left: 732px; top: 21px; width: 328px; height: 577px; background: #dcdcdc; border: 1px solid #a8a8a8; border-top: 0; box-sizing: border-box; padding: 0 5px; display: flex; flex-direction: column;
`;
const DlgTitle = styled.div`
  margin: 0 -6px; height: 26px; flex: none; background: #549fba; color: #fff; font-size: 14px; display: flex; align-items: center; padding: 0 8px; gap: 7px;
`;
const DlgPanel = styled.div`
  background: #f0f0f0; border-bottom: 1px solid #a0a0a0; padding: 0 9px; display: flex; flex-direction: column; flex: none; margin-top: ${p => p.$mt}px; height: ${p => p.$h}px; box-sizing: border-box;
`;
const PanelHead = styled.div`
  height: ${p => p.$h || 30}px; padding-bottom: ${p => p.$pb || 0}px; box-sizing: border-box; display: flex; align-items: center; justify-content: space-between; color: #0d7799; font-size: 14px; flex: none; margin-left: -2px; margin-right: -6px;
`;
const RadioBox = styled.div`
  height: 55px; flex: none; background: #dcdcdc; border: 1px solid #b4b4b4; box-sizing: border-box; display: grid; grid-template-columns: 68px 68px 1fr; align-items: center; padding: 3px 0 3px 5px;
`;
const Radio = styled.div`
  display: flex; align-items: center; gap: 5px; color: #8c8c8c; font-size: 12px;
  &::before { content: ''; width: 12px; height: 12px; border-radius: 50%; background: ${p => p.$on ? 'radial-gradient(#b4b4b4 3px, #fff 3.500px)' : '#fff'}; border: 1px solid #bcbcbc; box-sizing: border-box; }
`;
const PickRow = styled.div`
  display: flex; gap: 2px; height: 32px; margin-top: 2px; flex: none;
`;
const PickMain = styled.div`
  flex: 1; background: #ffde77; display: flex; align-items: center; gap: 5px; padding-left: 2px; font-size: 12px; color: #333;
`;
const PickBtn = styled.div`
  width: 32px; background: #ffde77; display: flex; align-items: center; justify-content: center;
`;
const AddRow = styled.div`
  height: 24px; margin-top: 2px; display: flex; justify-content: space-between; align-items: center; font-size: 12px; color: #333; flex: none;
`;
const AddBtn = styled.div`
  width: 24px; height: 24px; background: #7bb3cc; display: flex; align-items: center; justify-content: center; position: relative;
`;
const SubBox = styled.div`
  border: 1px solid #b4b4b4; background: #dcdcdc; box-sizing: border-box; flex: none; margin-top: ${p => p.$mt}px; height: ${p => p.$h}px; padding: 0 8px;
`;
const SubHead = styled.div`
  height: 20px; display: flex; align-items: center; justify-content: space-between; color: #2a7f9e; font-size: 12px;
`;
const ListWrap = styled.div`
  display: flex; gap: 2px; margin: 9px 0 0 1px;
`;
const ListTable = styled.div`
  width: 253px; height: 129px; background: #fafafa; border: 1px solid #b4b4b4; box-sizing: border-box; overflow: hidden; padding: 1px;
`;
const ListRow = styled.div`
  display: grid; grid-template-columns: 149px 1fr 4px; height: 20px; border-bottom: 1px solid #e8e8e8; box-sizing: border-box; background: ${p => p.$odd ? '#f5f5f5' : '#fafafa'};
`;
const ListCell = styled.div`
  display: flex; align-items: center; font-size: 12px; color: #333; padding-left: ${p => p.$pl || 0}px; border-right: 1px solid #e4e4e4; position: relative; box-sizing: border-box;
  ${p => p.$sel && 'background: #8ac2d3;'}
`;
const ListTree = styled.span`
  width: 19px; height: 100%; flex: none; position: relative;
  &::before { content: ''; position: absolute; left: 9px; top: ${p => p.$last ? 0 : '50%'}; bottom: ${p => p.$last ? '50%' : 0}; border-left: 1px dotted #888; }
  &::after { content: ''; position: absolute; left: 10px; right: 0; top: 50%; border-top: 1px dotted #888; }
`;
const ListName = styled.span`
  flex: 1; height: 100%; display: flex; align-items: center; padding-left: 3px; background: ${p => p.$sel ? '#8ac2d3' : 'transparent'};
`;
const SideBtns = styled.div`
  display: flex; flex-direction: column; gap: 2px;
`;
const SideBtn = styled.div`
  width: 24px; height: 24px; border: 1px solid #bcbcbc; box-sizing: border-box; display: flex; align-items: center; justify-content: center;
  ${p => p.$strong && 'border-color: #8c8c8c;'}
`;
const MethodRow = styled.div`
  display: flex; gap: 2px; margin: 3px 0 0 -3px;
`;
const SqBtn = styled.div`
  width: 32px; height: 32px; flex: none; display: flex; align-items: center; justify-content: center;
  background: ${p => p.$bg || 'transparent'}; ${p => p.$bd && 'border: 1px solid #a0a0a0; box-sizing: border-box; background: #f4f4f4;'}
`;
const ResultText = styled.div`
  font-size: 12px; line-height: 17px; color: #333; margin: 5px 0 5px;
`;
const ResRow = styled.div`
  display: flex; gap: 2px;
`;
const MoreRow = styled.div`
  height: 17px; flex: none; display: flex; align-items: center; justify-content: center; border-bottom: 1px solid #e4e4e4; margin: 0;
`;
const Footer = styled.div`
  display: flex; justify-content: flex-end; gap: 5px; padding: 9px 10px 0 0;
`;
const DlgBtn = styled.div`
  width: 54px; height: 25px; border: 1px solid #a0a0a0; box-sizing: border-box; display: flex; align-items: center; justify-content: center; font-size: 12px; color: #333;
`;

const StatusBar = styled.div`
  height: 22px; flex: none; border-top: 2px solid #b4b4b4; box-sizing: border-box; display: flex; align-items: center; font-size: 11px; font-weight: 700; color: #333; padding: 0 0 4px 3px; background: #f0f0f0;
`;
const StatusMid = styled.div`
  position: absolute; left: 666px;
`;
const StatusRight = styled.div`
  margin-left: auto; display: flex; gap: 6px; padding-right: 55px;
`;
const Taskbar = styled.div`
  height: 40px; flex: none; background: linear-gradient(90deg, #22363f 0%, #22353f 55%, #1a2a47 100%); display: flex; align-items: center; color: #fff; position: relative;
`;
const TaskItem = styled.div`
  width: ${p => p.$w || 49}px; height: 100%; flex: none; display: flex; align-items: center; justify-content: center; box-sizing: border-box;
  ${p => p.$on && 'border-bottom: 2px solid #76b9ed;'}
  ${p => p.$act && 'background: #566970;'}
`;
const Tray = styled.div`
  margin-left: auto; display: flex; align-items: center; gap: 9px; height: 100%; padding-right: 25px;
`;
const TrayGlyph = styled.span`
  margin: 0 3px 0 2px;
`;
const Clock = styled.div`
  width: 64px; text-align: center; font-size: 12px; line-height: 17px; margin-left: 5px; padding-bottom: 2px;
`;
const Watermark = styled.div`
  position: absolute; right: 3px; bottom: 3px; font: 14px "Liberation Serif", "Noto Sans CJK SC", serif; color: rgba(220, 220, 220, .62); white-space: nowrap;
`;

/* ---------- model, drawn in crop units (x 2.613/px, y 3/px from 360,360) ---------- */
const Model = () => (
  <svg width="1077" height="605" viewBox="7.84 -381 2814.5 1815" preserveAspectRatio="none">
    <defs>
      <linearGradient id="wall" x1="0" x2="1" y1="0" y2="0"><stop offset="0" stopColor="#3f87c6" /><stop offset=".5" stopColor="#4a98dc" /><stop offset="1" stopColor="#3b80c0" /></linearGradient>
      <radialGradient id="floor" gradientUnits="userSpaceOnUse" cx="700" cy="190" r="560" gradientTransform="translate(0 130) scale(1 .35)"><stop offset="0" stopColor="#a4ffff" /><stop offset=".6" stopColor="#78e8ff" /><stop offset="1" stopColor="#4fb4e8" /></radialGradient>
      <linearGradient id="orange" x1="0" x2="1"><stop offset="0" stopColor="#d0883f" /><stop offset=".6" stopColor="#cf883f" /><stop offset="1" stopColor="#b87a38" /></linearGradient>
      <radialGradient id="ball" cx=".4" cy=".35"><stop offset="0" stopColor="#e4dc9c" /><stop offset="1" stopColor="#8c7c30" /></radialGradient>
    </defs>
    <g stroke="#14324c" strokeWidth="1.8" strokeLinejoin="round">
      {/* lower flange, left */}
      <path d="M10 345C35 332 55 326 62 325L140 378 175 440 145 570 140 600 10 480Z" fill="#64d6ff" />
      <path d="M10 480L140 600 100 655 10 585Z" fill="#418ac8" />
      <path d="M75 432C85 405 110 385 135 378L175 440 150 548C110 510 80 470 75 432Z" fill="#4a96d6" />
      {/* top flange */}
      <path d="M28 140C40 70 170 38 280 42 520 55 800 120 1000 190 1240 270 1480 400 1540 510 1542 550 1535 580 1530 590L1280 600 1100 520 480 400 150 305C90 270 40 210 28 140Z" fill="#64d6ff" />
      <path d="M130 165C140 110 260 78 400 85 700 110 1000 200 1200 300 1350 370 1440 470 1436 520 1420 550 1390 575 1370 590L1280 600 1100 520 620 300 170 255C150 225 135 195 130 165Z" fill="url(#floor)" />
      <path d="M28 140C5 190 5 235 20 255 50 300 100 340 135 378L148 305C90 270 40 210 28 140Z" fill="#418ac8" />
      <path d="M148 305L205 312 195 340 135 378Z" fill="#3f86c4" />
      {/* ribs */}
      <path d="M375 160L415 158 580 280 375 295C385 240 385 200 375 160Z" fill="#4389c8" />
      {/* boss */}
      <path d="M195 338C280 370 400 405 490 385L470 510 430 520 435 650 420 725C340 745 200 720 100 655Z" fill="url(#wall)" />
      <path d="M170 255C250 255 350 270 420 310 470 340 495 360 495 380 480 400 430 400 380 395L195 338 205 295 148 305Z" fill="#64d6ff" />
      <path d="M205 290C260 275 350 295 400 320 440 345 430 370 400 375 350 375 290 362 255 342L203 332Z" fill="#4690d0" />
      {/* floor */}
      <path d="M475 460L565 465C700 530 850 560 960 565L1180 660 1140 840 925 710 585 670 430 650 470 510Z" fill="#62d5ff" />
      {/* connector */}
      <path d="M490 385L565 410 565 465 475 460Z" fill="#4287c6" />
      <path d="M490 365L570 385 570 415 492 388Z" fill="#64d6ff" />
      {/* hub */}
      <path d="M570 415L565 465C700 530 850 565 960 565L975 490C850 490 700 470 570 415Z" fill="#4692d2" />
      <path d="M510 320C520 290 600 280 650 285 780 290 960 330 1035 440 1040 475 1010 490 975 490 850 490 700 470 570 415 540 390 505 350 510 320Z" fill="#64d6ff" />
      <path d="M590 335C590 310 650 305 720 320 820 340 960 390 965 430 955 470 880 465 820 450 730 430 610 380 590 335Z" fill="#4690d0" />
      {/* right rib */}
      <path d="M970 380L1125 338 1165 360C1130 420 1120 480 1110 525L1010 485C1040 470 1040 450 1035 440 1020 420 990 395 970 380Z" fill="#4389c8" />
      <path d="M1120 458C1200 490 1260 540 1282 590L1240 600 1110 525Z" fill="#4389c8" />
      <path d="M975 490L1110 525 1240 600 1180 660 960 565Z" fill="#64d6ff" />
      {/* lower walls */}
      <path d="M585 670C650 705 800 745 910 745L925 705 720 660Z" fill="#418ac8" />
      <path d="M925 705V745L1135 840 1185 850 1200 780 1180 720Z" fill="#3f86c4" />
      <path d="M1135 840C1150 900 1200 970 1250 982 1340 975 1440 940 1470 870L1480 790 1230 640C1170 650 1140 700 1170 770Z" fill="#418ac8" />
      <path d="M1245 870C1255 860 1300 855 1470 830V860C1400 885 1320 900 1270 908Z" fill="#64d6ff" />
    </g>
    {/* green axes */}
    <g stroke="#19e619" strokeWidth="4" strokeDasharray="28 9">
      <path d="M790 310L708 712" />
      <path d="M365 365L340 490" />
      <path d="M935 625L910 748" />
    </g>
    {/* orange selected face */}
    <path d="M250 483L225 592C350 640 450 665 580 668 700 675 820 670 920 690 980 705 1030 745 1060 760L1155 845 1180 742 1075 650C1040 620 960 590 840 570 740 562 640 565 540 552 440 535 340 505 250 483Z" fill="url(#orange)" stroke="#ff9c44" strokeWidth="7" strokeLinejoin="round" />
    <path d="M637 565L618 668M837 572L818 672M1075 650L1056 755" stroke="#ff9c44" strokeWidth="6" />
    <path d="M225 592C350 640 450 665 580 668M250 483C340 505 440 535 540 552" fill="none" stroke="#222" strokeWidth="1.5" strokeDasharray="6 10" />
    <g stroke="#19e619" strokeWidth="4" strokeDasharray="28 9">
      <path d="M768 425L708 712" />
      <path d="M935 625L910 748" />
    </g>
    {/* wcs */}
    <path d="M790 320L688 255 650 440M790 320L927 327 888 515M790 320L822 170" fill="none" stroke="#1414e0" strokeWidth="2" />
    <path d="M815 182L828 140 830 182Z" fill="#0a0ac8" />
    <text x="820" y="128" fontSize="36" fill="#2222e0" fontFamily="Liberation Sans, sans-serif">Z</text>
    <path d="M750 510L650 440 780 445 888 515ZM650 440L565 385M888 515L1000 520" fill="none" stroke="#c8c8cc" strokeWidth="3" />
    <path d="M552 380L582 388 570 400ZM988 512L1025 520 988 528Z" fill="#a8a8a8" />
    <text x="528" y="380" fontSize="36" fill="#bdbdbd" fontFamily="Liberation Sans, sans-serif">Y</text>
    <text x="1026" y="534" fontSize="36" fill="#bdbdbd" fontFamily="Liberation Sans, sans-serif">X</text>
    {/* leader */}
    <path d="M543 606L1222 618" stroke="#a46c32" strokeWidth="3" />
    <ellipse cx="543" cy="606" rx="11" ry="12" fill="url(#ball)" />
    {/* triad */}
    <g transform="translate(151.600 1215) scale(2.613 3)" fontFamily="Liberation Sans, sans-serif" fontSize="10">
      <path d="M-14 -8L0 -18 14 -8 14 8 0 18 -14 8Z" fill="#dfe0e2" stroke="#777" strokeWidth=".7" />
      <path d="M-14 -8L0 2 14 -8M0 2V18" fill="none" stroke="#777" strokeWidth=".7" />
      <path d="M-4 16V-22" stroke="#1a1ac8" strokeWidth="1" />
      <path d="M-4 16L24 16" stroke="#b8b8b8" />
      <path d="M-4 16L-22 6" stroke="#109a30" strokeWidth=".8" />
      <path d="M-4 16L20 17" stroke="#c81414" strokeWidth=".8" />
      <circle cx="-4" cy="16" r="2.500" fill="#908a60" />
      <text x="2" y="-18" fill="#1a1ac8">Z</text>
      <text x="-30" y="7" fill="#109a30">Y</text>
      <text x="23" y="21" fill="#c81414">X</text>
    </g>
  </svg>
);

/* ---------- data ---------- */
const features = [
  ['datum', '基准坐标系 (0)'], ['extrude', '拉伸 (1)'], ['extrude', '拉伸 (2)'], ['blend', '边倒圆 (3)'], ['extrude', '拉伸 (4)'],
  ['shell', '壳 (5)'], ['extrude', '拉伸 (6)'], ['pattern', '阵列特征 [圆形] (7)', 'exp'], ['extrude', '拉伸 (8)'], ['extrude', '拉伸 (9)'],
  ['extrude', '拉伸 (10)'], ['delete', '删除面 (11)'], ['extrude', '拉伸 (12)', 'info'], ['offset', '偏置区域 (14)'], ['unite', '合并 (15)', 'last'],
];
const tabs = ['主页', '装配', '曲线', '分析', '视图', '渲染', '工具', '应用模块', '星空 V6.936F'];
const railItems = [['gear', 22, 2], ['asm', 30, 23], ['constr', 30, 13], ['part', 44, 5, true], ['books', 30, 6], ['info', 30, 25], ['doc', 30, 22], ['clock', 30, 24], ['rainbow', 30, 13], ['wand', 30, 11], ['tools', 30, 12]];
const greyTop = ['wcs', 'dots', 'slash', 'poly', 'fan', 'ring', 'slash', 'sheet'];
const greyBot = ['next', 'end', 's', 'wave', 'center', 'plus', 'blob', 'grid'];
const tipRows = [['面积', '1236.2171'], ['周长', '327.2434'], ['重心', 'Point( -24.7379, -35.9864, 0.0000 )'], ['最小曲率半径', '17.0000']];

export default function App() {
  return (
    <Page>
      <Global />
      <TitleBar>
        <Progress />
        <QuickBar>
          <NxLogo>NX</NxLogo>
          <QuickBtn $w={32}><Save /></QuickBtn>
          <VSep />
          <QuickBtn $w={28}><Undo /></QuickBtn>
          <QuickBtn $w={8}><Arrow c="#bbb" /></QuickBtn>
          <QuickBtn $w={26}><Undo flip /></QuickBtn>
          <VSep />
          <QuickBtn $w={28}><Cut /></QuickBtn>
          <QuickBtn $w={20}><Copy /></QuickBtn>
          <QuickBtn $w={24}><Paste /></QuickBtn>
          <QuickBtn $w={25}><Crop /></QuickBtn>
          <VSep />
          <QuickBtn $w={28}><Ruler /></QuickBtn>
          <QuickBtn $w={13}><Arrow /></QuickBtn>
          <VSep />
          <QuickBtn $w={26}><Brush /></QuickBtn>
          <VSep />
          <QuickBtn $w={74} $gap={6}><SwitchWin />切换窗口</QuickBtn>
          <QuickBtn $w={50} $gap={5}><Win />窗口</QuickBtn>
          <QuickBtn $w={6}><Arrow /></QuickBtn>
          <QuickBtn $w={12}><Arrow /></QuickBtn>
        </QuickBar>
        <AppTitle>NX 12 - 建模</AppTitle>
        <Siemens>SIEMENS</Siemens>
        <WinBtns>
          <svg width="12" height="12" viewBox="0 0 12 12"><path d="M2 10h8" stroke="#333" strokeWidth="2" /></svg>
          <svg width="12" height="12" viewBox="0 0 12 12"><path d="M3 3V1h8v7H9M1 3h8v8H1z" fill="none" stroke="#333" strokeWidth="1.2" /></svg>
          <X size={14} strokeWidth={1.6} color="#333" />
        </WinBtns>
      </TitleBar>

      <TabBar>
        <FileTab>文件(F)</FileTab>
        {tabs.map(t => <Tab key={t} $active={t === '分析'}>{t}</Tab>)}
        <TabRight>
          <SearchBox>查找命令<Search size={14} color="#333" style={{ transform: 'scaleX(-1)' }} /></SearchBox>
          <FitScreen />
          <svg width="20" height="14" viewBox="0 0 20 14"><path d="M2 11L10 3l8 8" fill="none" stroke="#111" strokeWidth="4" /><path d="M2 11L10 3l8 8" fill="none" stroke="#fff" strokeWidth="2" /></svg>
          <Help />
        </TabRight>
      </TabBar>

      <Ribbon>
        <RGroup $w={99}>
          <RBody>
            <BigTool $w={56}><BigIcon><Ruler s={30} /></BigIcon>测量</BigTool>
            <BigTool $w={40}><MoreBtn><Ruler s={14} /></MoreBtn>更多<ToolArrow><Arrow /></ToolArrow></BigTool>
          </RBody>
          <RLabel $pr={14}>测量<RArrow><Arrow /></RArrow></RLabel>
        </RGroup>
        <RGroup $w={277}>
          <RBody $pad={8}>
            <BigTool><BigIcon><Pole /></BigIcon>显示极点</BigTool>
            <BigTool><BigIcon><Knot /></BigIcon>显示结点</BigTool>
            <BigTool><BigIcon><EndPt /></BigIcon>显示端点</BigTool>
            <SmallTools>
              <SmallTool><Mirror v={0} />镜像显示</SmallTool>
              <SmallTool><Mirror v={1} />设置镜像平面...</SmallTool>
              <SmallTool><Mirror v={2} />显示阻碍的</SmallTool>
            </SmallTools>
          </RBody>
          <RLabel>显示<RArrow><Arrow /></RArrow></RLabel>
        </RGroup>
        <RGroup $w={55}>
          <RBody>
            <BigTool $w={55}><BigIcon><Reflect /></BigIcon>反射</BigTool>
          </RBody>
          <RLabel $pr={14}>面形状<RArrow><Arrow /></RArrow></RLabel>
        </RGroup>
        <RGroup $w={43}>
          <RBody>
            <BigTool $w={42}><MoreBtn><RulerRainbow /></MoreBtn>更多<ToolArrow><Arrow /></ToolArrow></BigTool>
          </RBody>
        </RGroup>
        <CornerArrow $b={6}><Arrow /></CornerArrow>
      </Ribbon>

      <SelBar>
        <MenuBtn><MenuIc />菜单(M)<Arrow /></MenuBtn>
        <BarSep $r={12} />
        <Select $w={133} $mr={9}>无选择过滤器<Arrow /></Select>
        <Select $w={140} $mr={5}>整个装配<Arrow /></Select>
        <IconCell><Gray k="gears" /></IconCell>
        <IconCell><Gray k="undoF" /></IconCell>
        <IconCell $w={22}><Filter /></IconCell>
        <IconCell $w={10}><Arrow /></IconCell>
        <IconCell><Sel k="redX" /></IconCell>
        <IconCell><Sel k="bino" /></IconCell>
        <IconCell><Gray k="selGrey" /></IconCell>
        <IconCell $w={28}><Sel k="box" /></IconCell>
        <IconCell $w={8}><Arrow /></IconCell>
        <IconCell $w={28}><Sel k="tilt" /></IconCell>
        <IconCell $w={28}><Sel k="cube" /></IconCell>
        <Select $w={140}>单个面<Arrow /></Select>
        <TwoSel>
          <Select $w={139}>单条曲线<Arrow /></Select>
          <Select $w={139}>单个体<Arrow /></Select>
        </TwoSel>
        <IconRows>
          {greyTop.map((k, i) => <IconCell key={i}>{i === 0 ? <Sel k={k} /> : <Gray k={k} />}</IconCell>)}
          {greyBot.map((k, i) => <IconCell key={i}>{i === 0 ? <Sel k={k} /> : <Gray k={k} />}</IconCell>)}
        </IconRows>
        <BarSep $l={5} $r={8} />
        <IconCell $w={25}><Sel k="zoomFit" /></IconCell>
        <ViewRows>
          <IconCell><Sel k="hand" /></IconCell>
          <IconCell><Sel k="bar" /></IconCell>
          <SplitCell $w={42} $pl={4}><Sel k="redgrid" /><Arrow /></SplitCell>
          <SplitCell $w={37} $pl={0}><Sel k="blueCube" /><Arrow /></SplitCell>
          <IconCell><Sel k="spin" /></IconCell>
          <IconCell><Gray k="doc" /></IconCell>
          <SplitCell $w={42} $pl={4}><Sel k="dish" /><Arrow /></SplitCell>
          <SplitCell $w={37} $pl={0}><Sel k="mix" /><Arrow /></SplitCell>
        </ViewRows>
        <BarSep />
        <CornerArrow $b={6}><Arrow /></CornerArrow>
      </SelBar>

      <Main>
        <Rail>
          {railItems.map(([k, h, mt, on], i) => (
            <RailItem key={i} $h={h} $mt={mt} $active={on}><RailIc k={k} /></RailItem>
          ))}
        </Rail>
        <NavPanel>
          <NavHead>部件导航器<MaxIcon /></NavHead>
          <TreeBox>
            <TreeRow $head>
              <Cell $pl={5} $gap={19}>名称<svg width="9" height="5" viewBox="0 0 9 5"><path d="M0 5h9L4.500 0z" fill="#111" /></svg></Cell>
              <Cell $pl={6}>最新</Cell>
              <Cell $pl={5}>附</Cell>
            </TreeRow>
            <TreeList>
              <TreeRow>
                <Cell $pl={5}><ExpSlot $first><Expander $plus /></ExpSlot><FeatIcon k="model" />模型视图</Cell><Cell /><Cell />
              </TreeRow>
              <TreeRow $odd>
                <Cell $pl={5}><ExpSlot><Expander $plus /></ExpSlot><Check /><FeatIcon k="camera" />摄像机</Cell><Cell /><Cell />
              </TreeRow>
              <TreeRow>
                <Cell $pl={5}><ExpSlot $end><Expander /></ExpSlot><FeatIcon k="folder" />模型历史记录</Cell><Cell /><Cell />
              </TreeRow>
              {features.map(([k, label, flag], i) => (
                <TreeRow key={i} $odd={i % 2 === 0}>
                  <Cell $gap={2} $bold={flag === 'last'}>
                    <Gutter $last={flag === 'last'}>{flag === 'exp' && <GutterExp $plus />}</Gutter>
                    {flag === 'info' ? <InfoBadge><BoxCheck /><BadgeDot>i</BadgeDot></InfoBadge> : <BoxCheck />}
                    <FeatIcon k={k} />{label}
                  </Cell>
                  <Cell $pl={6}><Check /></Cell>
                  <Cell />
                </TreeRow>
              ))}
              {Array.from({ length: 6 }).map((_, i) => (
                <TreeRow key={i} $odd={i % 2 === 1}><Cell /><Cell /><Cell /></TreeRow>
              ))}
            </TreeList>
            <ScrollBar>
              <Thumb />
              <ChevronLeft size={13} strokeWidth={3} color="#555" />
              <ChevronRight size={13} strokeWidth={3} color="#555" />
            </ScrollBar>
          </TreeBox>
          <PanelGrip />
          {['相关性', '细节', '预览'].map(t => (
            <Fold key={t}>{t}<ChevronDown size={16} strokeWidth={2.6} color="#1a7a99" /></Fold>
          ))}
        </NavPanel>
        <Workspace>
          <DocBar>
            <DocTab>
              <svg width="14" height="14" viewBox="0 0 14 14"><path d="M7 1l6 3v6l-6 3-6-3V4z" fill="#2a70c8" stroke="#dfe" strokeWidth=".6" /><circle cx="7" cy="7" r="2.500" fill="#cde" /></svg>
              练习2332.prt
              <svg width="11" height="11" viewBox="0 0 11 11"><path d="M2 2h4M2 2v7h7V6" fill="none" stroke="#fff" strokeWidth="1.5" /><path d="M5 6l4-4M6 2h3v3" fill="none" stroke="#fff" /></svg>
              <X size={11} color="#bfe" strokeWidth={2} />
            </DocTab>
          </DocBar>
          <Viewport>
            <Model />
            <Tip>
              <TipGrid>
                {tipRows.map(([a, b]) => (
                  <React.Fragment key={a}><TipCell>{a}</TipCell><TipCell>{b}</TipCell></React.Fragment>
                ))}
              </TipGrid>
            </Tip>
          </Viewport>
          <Dialog>
            <DlgTitle>
              <Settings size={14} strokeWidth={2.6} color="#fff" />测量
              <RotateCw size={13} strokeWidth={2.6} color="#fff" style={{ marginLeft: 'auto', transform: 'scaleX(-1)' }} />
              <X size={15} strokeWidth={3} color="#fff" />
            </DlgTitle>
            <DlgPanel $mt={4} $h={387}>
              <PanelHead $pb={4}>要测量的对象<ChevronUp size={16} strokeWidth={2.6} color="#0d6f8e" /></PanelHead>
              <RadioBox>
                <Radio>对象</Radio><Radio>点</Radio><Radio>矢量</Radio>
                <Radio $on>对象集</Radio><Radio>点集</Radio><Radio>坐标系</Radio>
              </RadioBox>
              <PickRow>
                <PickMain><Check />选择对象 (4)</PickMain>
                <PickBtn><Cross s={19} /></PickBtn>
              </PickRow>
              <AddRow>添加新集
                <AddBtn>
                  <svg width="18" height="18" viewBox="0 0 18 18"><path d="M1 4h6M4 1v6" stroke="#0a50e8" strokeWidth="2" /><path d="M11 6v12M5 12h12" stroke="#000" /><circle cx="11" cy="12" r="3" fill="none" stroke="#e00" strokeWidth="1.2" /></svg>
                </AddBtn>
              </AddRow>
              <SubBox $mt={2} $h={168}>
                <SubHead>列表<ChevronUp size={14} strokeWidth={2.4} color="#0d6f8e" /></SubHead>
                <ListWrap>
                  <ListTable>
                    <ListRow $odd>
                      <ListCell><ListTree /><ListName $sel>对象集 1</ListName></ListCell>
                      <ListCell $sel $pl={4}>面 / 拉伸(12)</ListCell><ListCell />
                    </ListRow>
                    <ListRow>
                      <ListCell><ListTree $last /><ListName>选择集</ListName></ListCell><ListCell /><ListCell />
                    </ListRow>
                    {[1, 2, 3, 4].map(i => <ListRow key={i} $odd={i % 2 === 1}><ListCell /><ListCell /><ListCell /></ListRow>)}
                    <ListRow><ListCell /><ListCell /><ListCell /></ListRow>
                  </ListTable>
                  <SideBtns>
                    <SideBtn $strong><X size={18} strokeWidth={2.8} color="#1a1a1a" /></SideBtn>
                    <SideBtn><svg width="14" height="14" viewBox="0 0 14 14"><path d="M1 1h12" stroke="#999" strokeWidth="1.4" /><path d="M7 3l5 5H9v5H5V8H2z" fill="#999" /></svg></SideBtn>
                    <SideBtn><svg width="14" height="14" viewBox="0 0 14 14"><path d="M7 2l6 6H9.500v4h-5V8H1z" fill="#999" /></svg></SideBtn>
                    <SideBtn><svg width="14" height="14" viewBox="0 0 14 14"><path d="M7 12L1 6h3.500V2h5v4H13z" fill="#999" /></svg></SideBtn>
                    <SideBtn><svg width="14" height="14" viewBox="0 0 14 14"><path d="M1 13h12" stroke="#999" strokeWidth="1.4" /><path d="M7 11L2 6h3V1h4v5h3z" fill="#999" /></svg></SideBtn>
                  </SideBtns>
                </ListWrap>
              </SubBox>
              <SubBox $mt={3} $h={61}>
                <SubHead>测量方法</SubHead>
                <MethodRow>
                  <SqBtn $bg="#8ac2d3"><Method k={0} /></SqBtn>
                  <SqBtn><Method k={1} /></SqBtn>
                  <SqBtn><Method k={2} /></SqBtn>
                  <SqBtn><Method k={3} /></SqBtn>
                </MethodRow>
              </SubBox>
            </DlgPanel>
            <DlgPanel $mt={4} $h={94}>
              <PanelHead $h={26} $pb={2}>结果过滤器<ChevronUp size={16} strokeWidth={2.6} color="#0d6f8e" /></PanelHead>
              <ResultText>显示 1 个测量，共 1 个</ResultText>
              <ResRow>
                {[0, 1, 2, 3, 4].map(k => <SqBtn key={k} $bg="#ffde77"><Res k={k} /></SqBtn>)}
                <SqBtn $bd><svg width="26" height="26" viewBox="0 0 26 26"><path d="M3 3h14v4H3zM3 9h14v4H3zM3 15h14v4H3z" fill="#fff" stroke="#111" /><path d="M5 5h10M5 11h10M5 17h10" stroke="#1a1a90" strokeDasharray="3 1" /><path d="M21 16v8M17 20h8" stroke="#0a60e8" strokeWidth="2" /></svg></SqBtn>
              </ResRow>
            </DlgPanel>
            <MoreRow><svg width="9" height="5" viewBox="0 0 9 5"><path d="M0 0h9L4.500 5z" fill="#222" /></svg></MoreRow>
            <Footer>
              <DlgBtn>确定</DlgBtn><DlgBtn>应用</DlgBtn><DlgBtn>取消</DlgBtn>
            </Footer>
          </Dialog>
        </Workspace>
      </Main>

      <StatusBar>
        选择要添加到当前集的对象，或按 MB2 完成当前集
        <StatusMid>面 已选定 - 全部 4</StatusMid>
        <StatusRight>
          <svg width="15" height="15" viewBox="0 0 15 15"><rect width="15" height="15" fill="#bdbdbd" /><path d="M3 12L5 3l7 1-2 8zM5 3l2 9M4 7l7 1" stroke="#eee" fill="none" /></svg>
          <svg width="15" height="15" viewBox="0 0 24 24"><path d="M1 6V1h5M18 1h5v5M1 18v5h5M18 23h5v-5" fill="none" stroke="#666" strokeWidth="1.5" /><rect x="5" y="5" width="14" height="14" fill="#fff" stroke="#555" /><rect x="7" y="8" width="10" height="9" fill="#2a70c8" /></svg>
        </StatusRight>
      </StatusBar>

      <Taskbar>
        <TaskItem $w={48}><Tk k="start" /></TaskItem>
        <TaskItem $w={50}><Tk k="view" /></TaskItem>
        <TaskItem><Tk k="video" /></TaskItem>
        <TaskItem $on><Tk k="folder" /></TaskItem>
        <TaskItem><Tk k="store" /></TaskItem>
        <TaskItem><Tk k="mail" /></TaskItem>
        <TaskItem $on><Tk k="firefox" /></TaskItem>
        <TaskItem><Tk k="edge" /></TaskItem>
        <TaskItem><Tk k="bird" /></TaskItem>
        <TaskItem><Tk k="shield" /></TaskItem>
        <TaskItem $on><Tk k="nx" /></TaskItem>
        <TaskItem $on $act><Tk k="cut" /></TaskItem>
        <Tray>
          <ChevronUp size={15} color="#fff" strokeWidth={1.5} />
          <svg width="16" height="15" viewBox="0 0 16 15"><path d="M4 1h11v9H4zM1 4h5v10H1zM7 13h6" fill="none" stroke="#fff" /></svg>
          <svg width="14" height="17" viewBox="0 0 14 17"><rect x="4" y="0" width="6" height="11" rx="3" fill="#fff" /><path d="M2 7c0 6 10 6 10 0M7 12v4M4 16h6" fill="none" stroke="#fff" /></svg>
          <svg width="16" height="15" viewBox="0 0 16 15"><path d="M1 5h3l4-3v11l-4-3H1zM11 4c1 2 1 5 0 7M13 2c2 3 2 8 0 11" fill="none" stroke="#fff" /></svg>
          <TrayGlyph>中</TrayGlyph>
          <svg width="16" height="16" viewBox="0 0 16 16"><rect width="16" height="16" rx="3" fill="#1f86e8" /><circle cx="8" cy="7" r="4" fill="none" stroke="#fff" strokeWidth="1.5" /><path d="M6 13h4" stroke="#fff" /><circle cx="13" cy="14" r="1.500" fill="#5d5" /></svg>
          <Clock>9:00<br />2021/10/01</Clock>
          <svg width="16" height="15" viewBox="0 0 16 15" style={{ marginLeft: 8 }}><path d="M1 1h14v10h-5l-2 3-2-3H1z" fill="none" stroke="#fff" /></svg>
        </Tray>
        <Watermark>UG爱好者论坛/@NX小白白</Watermark>
      </Taskbar>
    </Page>
  );
}
